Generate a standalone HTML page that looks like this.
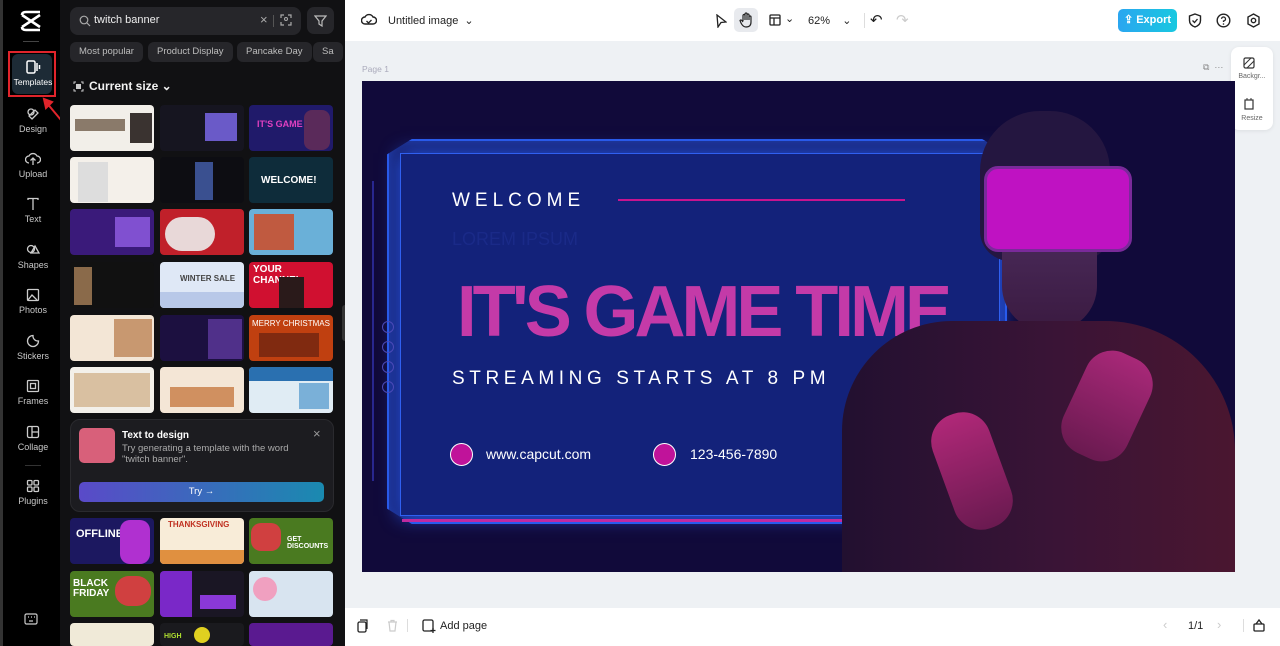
<!DOCTYPE html>
<html><head><meta charset="utf-8"><style>
*{box-sizing:border-box;margin:0;padding:0}
body{width:1280px;height:646px;overflow:hidden;font-family:"Liberation Sans",sans-serif;background:#fff;position:relative}
.abs{position:absolute}
#side{left:0;top:0;width:60px;height:646px;background:#000;border-left:3px solid #333}
.nav{position:absolute;left:3px;width:54px;text-align:center;color:#c8c8c8;font-size:9px}
.nav svg{display:block;margin:0 auto 3px}
#panel{left:60px;top:0;width:285px;height:646px;background:#111113}
.chip{position:absolute;top:42px;height:20px;border-radius:6px;background:#26262a;color:#bdbdbd;font-size:9.5px;line-height:20px;padding:0 9px;white-space:nowrap}
.th{position:absolute;width:84px;height:46px;border-radius:4px;overflow:hidden}
#main{left:345px;top:0;width:935px;height:646px;background:#eef1f4}
.tb{color:#222;font-size:11px}
</style></head><body>
<div id="side" class="abs">
 <svg class="abs" style="left:16px;top:10px" width="24" height="22" viewBox="0 0 24 22"><path d="M3 5 L21 17 M21 5 L3 17 M3 5 Q3 2 7 2 L21 2 M3 17 Q3 20 7 20 L21 20" stroke="#fff" stroke-width="2.6" fill="none"/></svg>
 <div class="abs" style="left:20px;top:41px;width:16px;height:1px;background:#444"></div>
 <div class="abs" style="left:5px;top:51px;width:48px;height:46px;border:2px solid #e0242b;"></div>
 <div class="abs" style="left:9px;top:54px;width:40px;height:40px;border-radius:6px;background:#1d2b36"></div>
 <div class="nav" style="top:60px;color:#fff;font-size:8.5px"><svg width="16" height="14" viewBox="0 0 16 14"><rect x="2" y="1" width="8" height="12" rx="1.5" stroke="#fff" stroke-width="1.5" fill="none"/><path d="M12 3v8M14.5 5v4" stroke="#fff" stroke-width="1.5"/></svg>Templates</div>
 <svg class="abs" style="left:38px;top:96px" width="24" height="26" viewBox="0 0 24 26"><path d="M20 24 L5 6 M3 3 L5 12 L11 6 Z" stroke="#e0242b" stroke-width="2" fill="#e0242b"/></svg>
 <div class="nav" style="top:107px"><svg width="14" height="14" viewBox="0 0 14 14"><circle cx="5" cy="5" r="3" stroke="#ccc" fill="none" stroke-width="1.3"/><path d="M6 12 L12 6 L9 3 L3 9Z" stroke="#ccc" fill="none" stroke-width="1.3"/></svg>Design</div>
 <div class="nav" style="top:152px"><svg width="16" height="14" viewBox="0 0 16 14"><path d="M4 11 A3.5 3.5 0 0 1 4 4 A4.5 4.5 0 0 1 12 4 A3.5 3.5 0 0 1 12 11 M8 13V6 M5.5 8.5 L8 6 L10.5 8.5" stroke="#ccc" fill="none" stroke-width="1.3"/></svg>Upload</div>
 <div class="nav" style="top:197px"><svg width="14" height="14" viewBox="0 0 14 14"><path d="M2 3V1.5H12V3 M7 1.5V13" stroke="#ccc" fill="none" stroke-width="1.3"/></svg>Text</div>
 <div class="nav" style="top:243px"><svg width="14" height="14" viewBox="0 0 14 14"><circle cx="5" cy="6" r="3.5" stroke="#ccc" fill="none" stroke-width="1.3"/><path d="M9 3 L13 10 H5 Z" stroke="#ccc" fill="none" stroke-width="1.3"/></svg>Shapes</div>
 <div class="nav" style="top:288px"><svg width="14" height="14" viewBox="0 0 14 14"><rect x="1.5" y="1.5" width="11" height="11" rx="1" stroke="#ccc" fill="none" stroke-width="1.3"/><path d="M2 12 L6 7 L11 12" stroke="#ccc" fill="none" stroke-width="1.3"/></svg>Photos</div>
 <div class="nav" style="top:334px"><svg width="14" height="14" viewBox="0 0 14 14"><path d="M12.5 7 A5.5 5.5 0 1 1 7 1.5 A5 5 0 0 0 12.5 7Z" stroke="#ccc" fill="none" stroke-width="1.3"/></svg>Stickers</div>
 <div class="nav" style="top:379px"><svg width="14" height="14" viewBox="0 0 14 14"><rect x="1.5" y="1.5" width="11" height="11" rx="1" stroke="#ccc" fill="none" stroke-width="1.3"/><rect x="4.5" y="4.5" width="5" height="5" stroke="#ccc" fill="none" stroke-width="1.3"/></svg>Frames</div>
 <div class="nav" style="top:425px"><svg width="14" height="14" viewBox="0 0 14 14"><rect x="1.5" y="1.5" width="11" height="11" rx="1.5" stroke="#ccc" fill="none" stroke-width="1.3"/><path d="M6 2V12 M6 7H12" stroke="#ccc" stroke-width="1.3"/></svg>Collage</div>
 <div class="abs" style="left:22px;top:465px;width:16px;height:1px;background:#333"></div>
 <div class="nav" style="top:479px"><svg width="14" height="14" viewBox="0 0 14 14"><rect x="1.5" y="1.5" width="4.5" height="4.5" rx="1" stroke="#ccc" fill="none" stroke-width="1.3"/><rect x="8" y="1.5" width="4.5" height="4.5" rx="1" stroke="#ccc" fill="none" stroke-width="1.3"/><rect x="1.5" y="8" width="4.5" height="4.5" rx="1" stroke="#ccc" fill="none" stroke-width="1.3"/><rect x="8" y="8" width="4.5" height="4.5" rx="1" stroke="#ccc" fill="none" stroke-width="1.3"/></svg>Plugins</div>
 <svg class="abs" style="left:21px;top:613px" width="14" height="12" viewBox="0 0 14 12"><rect x="1" y="1" width="12" height="10" rx="1.5" stroke="#ccc" fill="none" stroke-width="1.2"/><path d="M4 4h1M7 4h1M10 4h1M5 8h4" stroke="#ccc" stroke-width="1.2"/></svg>
</div>

<div id="panel" class="abs">
 <div class="abs" style="left:10px;top:7px;width:231px;height:28px;border-radius:8px;background:#26262a"></div>
 <svg class="abs" style="left:19px;top:15px" width="12" height="12" viewBox="0 0 12 12"><circle cx="5" cy="5" r="3.8" stroke="#aaa" fill="none" stroke-width="1.2"/><path d="M8 8L11 11" stroke="#aaa" stroke-width="1.2"/></svg>
 <div class="abs" style="left:34px;top:14px;color:#eee;font-size:11px">twitch banner</div>
 <div class="abs" style="left:200px;top:12px;color:#aaa;font-size:13px">×</div>
 <div class="abs" style="left:213px;top:15px;width:1px;height:12px;background:#555"></div>
 <svg class="abs" style="left:220px;top:14px" width="12" height="12" viewBox="0 0 12 12"><path d="M1 4V1H4M8 1H11V4M11 8V11H8M4 11H1V8" stroke="#aaa" fill="none" stroke-width="1.2"/><circle cx="6" cy="5" r="1.5" stroke="#aaa" fill="none"/></svg>
 <div class="abs" style="left:247px;top:7px;width:27px;height:27px;border-radius:7px;background:#26262a"></div>
 <svg class="abs" style="left:254px;top:14px" width="13" height="13" viewBox="0 0 13 13"><path d="M1 2H12L8 7V12L5 10V7Z" stroke="#bbb" fill="none" stroke-width="1.2"/></svg>
 <div class="chip" style="left:10px">Most popular</div>
 <div class="chip" style="left:88px">Product Display</div>
 <div class="chip" style="left:177px">Pancake Day</div>
 <div class="chip" style="left:253px;width:30px">Sa</div>
 <svg class="abs" style="left:13px;top:81px" width="11" height="11" viewBox="0 0 11 11"><path d="M1 3V1H3M8 1H10V3M10 8V10H8M3 10H1V8" stroke="#ccc" fill="none"/><rect x="3" y="3" width="5" height="5" fill="#ccc"/></svg>
 <div class="abs" style="left:29px;top:79px;color:#f2f2f2;font-size:12px;font-weight:bold">Current size ⌄</div>

 <div class="th" style="left:10px;top:105px;background:#f2efe9"><div class="abs" style="left:60px;top:8px;width:22px;height:30px;background:#3a3330"></div><div class="abs" style="left:5px;top:14px;width:50px;height:12px;background:#8a7a6a"></div></div>
 <div class="th" style="left:100px;top:105px;background:#161520"><div class="abs" style="left:45px;top:8px;width:32px;height:28px;background:#6a5ac8"></div></div>
 <div class="th" style="left:189px;top:105px;background:#201a6a"><div class="abs" style="left:8px;top:14px;color:#e040c0;font-size:9px;font-weight:bold">IT'S GAME TIM</div><div class="abs" style="left:55px;top:5px;width:26px;height:40px;background:#5a2a5a;border-radius:8px"></div></div>
 <div class="th" style="left:10px;top:157px;background:#f4f0ea"><div class="abs" style="left:8px;top:5px;width:30px;height:40px;background:#ddd"></div></div>
 <div class="th" style="left:100px;top:157px;background:#0d0d12"><div class="abs" style="left:35px;top:5px;width:18px;height:38px;background:#3a5090"></div></div>
 <div class="th" style="left:189px;top:157px;background:#0e2c3a"><div class="abs" style="left:12px;top:18px;color:#fff;font-size:10px;font-weight:bold">WELCOME!</div></div>
 <div class="th" style="left:10px;top:209px;background:#3a1a7a"><div class="abs" style="left:45px;top:8px;width:35px;height:30px;background:#8050d0"></div></div>
 <div class="th" style="left:100px;top:209px;background:#c0202a"><div class="abs" style="left:5px;top:8px;width:50px;height:34px;background:#e8d8d8;border-radius:20px"></div></div>
 <div class="th" style="left:189px;top:209px;background:#6ab0d8"><div class="abs" style="left:5px;top:5px;width:40px;height:36px;background:#c05a40"></div></div>
 <div class="th" style="left:10px;top:262px;background:#111"><div class="abs" style="left:4px;top:5px;width:18px;height:38px;background:#8a6a4a"></div></div>
 <div class="th" style="left:100px;top:262px;background:#dfe8f6"><div class="abs" style="left:20px;top:12px;color:#444;font-size:8px;font-weight:bold">WINTER SALE</div><div class="abs" style="left:0;top:30px;width:84px;height:16px;background:#b8c8e8"></div></div>
 <div class="th" style="left:189px;top:262px;background:#d01030"><div class="abs" style="left:4px;top:2px;color:#fff;font-size:10px;font-weight:bold">YOUR CHANNEL</div><div class="abs" style="left:30px;top:15px;width:25px;height:31px;background:#2a1a1a"></div></div>
 <div class="th" style="left:10px;top:315px;background:#f3e6d6"><div class="abs" style="left:44px;top:4px;width:38px;height:38px;background:#c89870"></div></div>
 <div class="th" style="left:100px;top:315px;background:#1c1040"><div class="abs" style="left:48px;top:4px;width:34px;height:40px;background:#50308a"></div></div>
 <div class="th" style="left:189px;top:315px;background:#c04010"><div class="abs" style="left:3px;top:4px;color:#fff;font-size:8px">MERRY CHRISTMAS</div><div class="abs" style="left:10px;top:18px;width:60px;height:24px;background:#802a10"></div></div>
 <div class="th" style="left:10px;top:367px;background:#f3f0ea"><div class="abs" style="left:4px;top:6px;width:76px;height:34px;background:#c8a070;opacity:.6"></div></div>
 <div class="th" style="left:100px;top:367px;background:#f4e6d6"><div class="abs" style="left:10px;top:20px;width:64px;height:20px;background:#d09060"></div></div>
 <div class="th" style="left:189px;top:367px;background:#e0ecf4"><div class="abs" style="left:0;top:0;width:84px;height:14px;background:#2a70b0"></div><div class="abs" style="left:50px;top:16px;width:30px;height:26px;background:#7ab0d8"></div></div>

 <div class="abs" style="left:10px;top:419px;width:264px;height:93px;border-radius:10px;background:#1c1c20;border:1px solid #2a2a2e"></div>
 <div class="abs" style="left:19px;top:428px;width:36px;height:35px;border-radius:5px;background:#d8607a"></div>
 <div class="abs" style="left:62px;top:430px;color:#fff;font-size:10px;font-weight:bold">Text to design</div>
 <div class="abs" style="left:62px;top:443px;color:#aaa;font-size:9.5px;line-height:11px;width:180px">Try generating a template with the word "twitch banner".</div>
 <div class="abs" style="left:253px;top:426px;color:#999;font-size:13px">×</div>
 <div class="abs" style="left:19px;top:482px;width:245px;height:20px;border-radius:5px;background:linear-gradient(90deg,#5a4ac8,#1a8ab0);color:#fff;font-size:9.5px;text-align:center;line-height:20px">Try →</div>

 <div class="th" style="left:10px;top:518px;background:#1c1860"><div class="abs" style="left:6px;top:10px;color:#fff;font-size:11px;font-weight:bold">OFFLINE</div><div class="abs" style="left:50px;top:2px;width:30px;height:44px;background:#b030d0;border-radius:10px"></div></div>
 <div class="th" style="left:100px;top:518px;background:#f8ecd8"><div class="abs" style="left:8px;top:2px;color:#c03020;font-size:8px;font-weight:bold">THANKSGIVING</div><div class="abs" style="left:0;top:32px;width:84px;height:14px;background:#e09040"></div></div>
 <div class="th" style="left:189px;top:518px;background:#4a7a20"><div class="abs" style="left:2px;top:5px;width:30px;height:28px;background:#d04040;border-radius:10px"></div><div class="abs" style="left:38px;top:18px;color:#fff;font-size:7px;font-weight:bold">GET DISCOUNTS</div></div>
 <div class="th" style="left:10px;top:571px;background:#4a7a20"><div class="abs" style="left:3px;top:8px;color:#fff;font-size:10px;font-weight:bold;line-height:10px">BLACK<br>FRIDAY</div><div class="abs" style="left:45px;top:5px;width:36px;height:30px;background:#d04040;border-radius:14px"></div></div>
 <div class="th" style="left:100px;top:571px;background:#1a1624"><div class="abs" style="left:0;top:0;width:32px;height:46px;background:#7a28c8"></div><div class="abs" style="left:40px;top:24px;width:36px;height:14px;background:#8a38d8"></div></div>
 <div class="th" style="left:189px;top:571px;background:#d8e4f0"><div class="abs" style="left:4px;top:6px;width:24px;height:24px;border-radius:50%;background:#f0a0c0"></div></div>
 <div class="th" style="left:10px;top:623px;background:#f0ead8;height:23px"></div>
 <div class="th" style="left:100px;top:623px;background:#1a1a1e;height:23px"><div class="abs" style="left:4px;top:10px;color:#b0e030;font-size:7px;font-weight:bold">HIGH</div><div class="abs" style="left:34px;top:4px;width:16px;height:16px;background:#e0d020;border-radius:50%"></div></div>
 <div class="th" style="left:189px;top:623px;background:#5a1a90;height:23px"></div>
 <div class="abs" style="left:282px;top:305px;width:7px;height:36px;border-radius:3px;background:#333"></div>
</div>

<div id="main" class="abs">
 <div class="abs" style="left:0;top:0;width:935px;height:41px;background:#fff"></div>
 <svg class="abs" style="left:16px;top:12px" width="16" height="15" viewBox="0 0 16 15"><path d="M4 12 A3.5 3.5 0 0 1 4 5 A4.5 4.5 0 0 1 12 5 A3.5 3.5 0 0 1 12 12Z" stroke="#222" fill="none" stroke-width="1.4"/><path d="M5.5 9 L7.5 11 L10.5 8" stroke="#222" fill="none" stroke-width="1.3"/></svg>
 <div class="abs tb" style="left:43px;top:14px">Untitled image &nbsp;⌄</div>
 <svg class="abs" style="left:370px;top:14px" width="12" height="14" viewBox="0 0 12 14"><path d="M2 1 L11 8 L6 8.5 L3 13Z" stroke="#222" fill="none" stroke-width="1.3"/></svg>
 <div class="abs" style="left:389px;top:8px;width:24px;height:24px;border-radius:5px;background:#e8eaee"></div>
 <svg class="abs" style="left:394px;top:12px" width="14" height="16" viewBox="0 0 14 16"><path d="M4 9V3.5a1 1 0 0 1 2 0V8 M6 7V2a1 1 0 0 1 2 0V8 M8 7V3a1 1 0 0 1 2 0V8 M10 8V5a1 1 0 0 1 2 0V10 Q12 15 7 15 Q4 15 2 11 L1 8.5 Q1.5 7.5 3 8.5 L4 10" stroke="#222" fill="none" stroke-width="1.2"/></svg>
 <svg class="abs" style="left:424px;top:14px" width="12" height="12" viewBox="0 0 12 12"><rect x="1" y="1" width="10" height="10" rx="1" stroke="#222" fill="none" stroke-width="1.3"/><path d="M1 4H11M5 4V11" stroke="#222" stroke-width="1.3"/></svg>
 <div class="abs tb" style="left:440px;top:12px">⌄</div>
 <div class="abs tb" style="left:463px;top:14px">62% &nbsp;&nbsp;&nbsp;⌄</div>
 <div class="abs" style="left:519px;top:13px;width:1px;height:15px;background:#ddd"></div>
 <div class="abs tb" style="left:525px;top:11px;font-size:15px">↶</div>
 <div class="abs tb" style="left:551px;top:11px;font-size:15px;color:#ccc">↷</div>
 <div class="abs" style="left:773px;top:9px;width:59px;height:23px;border-radius:5px;background:linear-gradient(90deg,#2aa6f0,#18c8e0);color:#fff;font-size:11px;font-weight:bold;line-height:23px;text-align:center">⇪ Export</div>
 <svg class="abs" style="left:843px;top:13px" width="14" height="15" viewBox="0 0 14 15"><path d="M7 1 L12.5 3 V7.5 Q12.5 12 7 14 Q1.5 12 1.5 7.5 V3Z" stroke="#222" fill="none" stroke-width="1.4"/><path d="M4.5 7.5 L6.5 9.5 L9.5 6" stroke="#222" fill="none" stroke-width="1.3"/></svg>
 <svg class="abs" style="left:871px;top:13px" width="15" height="15" viewBox="0 0 15 15"><circle cx="7.5" cy="7.5" r="6.3" stroke="#222" fill="none" stroke-width="1.4"/><path d="M5.5 5.8 A2 2 0 1 1 7.5 8 V9" stroke="#222" fill="none" stroke-width="1.3"/><circle cx="7.5" cy="11" r=".8" fill="#222"/></svg>
 <svg class="abs" style="left:901px;top:13px" width="15" height="15" viewBox="0 0 15 15"><path d="M7.5 1 L13 4 V11 L7.5 14 L2 11 V4Z" stroke="#222" fill="none" stroke-width="1.4"/><circle cx="7.5" cy="7.5" r="2.2" stroke="#222" fill="none" stroke-width="1.4"/></svg>

 <div class="abs" style="left:17px;top:64px;color:#aab;font-size:8.5px">Page 1</div>
 <div class="abs" style="left:858px;top:62px;color:#888;font-size:9px">⧉ &nbsp;···</div>
 <div class="abs" style="left:886px;top:47px;width:42px;height:83px;border-radius:8px;background:#fff;box-shadow:0 1px 4px rgba(0,0,0,.08)"></div>
 <svg class="abs" style="left:898px;top:57px" width="12" height="12" viewBox="0 0 12 12"><rect x="1" y="1" width="10" height="10" rx="1.5" stroke="#333" fill="none" stroke-width="1.2"/><path d="M1 8L8 1M4 11L11 4" stroke="#333" stroke-width="1"/></svg>
 <div class="abs" style="left:888px;top:73px;width:38px;text-align:center;color:#666;font-size:7px">Backgr...</div>
 <svg class="abs" style="left:898px;top:98px" width="12" height="12" viewBox="0 0 12 12"><rect x="2" y="2" width="8" height="9" stroke="#333" fill="none" stroke-width="1.2"/><path d="M4 0V2M8 0V2" stroke="#333"/></svg>
 <div class="abs" style="left:888px;top:115px;width:38px;text-align:center;color:#666;font-size:7px">Resize</div>

 <!-- canvas -->
 <div class="abs" style="left:17px;top:81px;width:873px;height:491px;background:#110a3a;overflow:hidden">
  <div class="abs" style="left:25px;top:58px;width:620px;height:385px;border:2px solid #2a5ae8;clip-path:polygon(4% 0,96% 0,100% 4%,100% 96%,96% 100%,4% 100%,0 96%,0 4%);box-shadow:0 0 20px #2a5ae8 inset"></div>
  <div class="abs" style="left:10px;top:100px;width:10px;height:300px;border-left:2px solid #3a3ac8;opacity:.6"></div>
  <div class="abs" style="left:38px;top:72px;width:600px;height:363px;background:#13227a;border:1px solid #3060f0;box-shadow:0 0 18px #2860ff"></div>
  <div class="abs" style="left:20px;top:240px;width:12px;height:12px;border:1.5px solid #4a4ab8;border-radius:50%"></div>
  <div class="abs" style="left:20px;top:260px;width:12px;height:12px;border:1.5px solid #4a4ab8;border-radius:50%"></div>
  <div class="abs" style="left:20px;top:280px;width:12px;height:12px;border:1.5px solid #4a4ab8;border-radius:50%"></div>
  <div class="abs" style="left:20px;top:300px;width:12px;height:12px;border:1.5px solid #4a4ab8;border-radius:50%"></div>
  <div class="abs" style="left:40px;top:438px;width:490px;height:3px;background:#c02aa0"></div>
  <div class="abs" style="left:90px;top:109px;color:#fff;font-size:19px;letter-spacing:5px">WELCOME</div>
  <div class="abs" style="left:256px;top:118px;width:287px;height:2px;background:#c8148e"></div>
  <div class="abs" style="left:90px;top:148px;color:#1a2a88;font-size:18px">LOREM IPSUM</div>
  <div class="abs" style="left:95px;top:190px;color:#c43aa8;font-size:72px;font-weight:bold;letter-spacing:-4px;white-space:nowrap;transform:scaleX(.98);transform-origin:left">IT'S GAME TIME</div>
  <div class="abs" style="left:90px;top:287px;color:#fff;font-size:19px;letter-spacing:4.6px;white-space:nowrap">STREAMING STARTS AT 8 PM</div>
  <div class="abs" style="left:88px;top:362px;width:23px;height:23px;border-radius:50%;background:#c0139a;border:1.5px solid #fff"></div>
  <div class="abs" style="left:124px;top:365px;color:#fff;font-size:14px">www.capcut.com</div>
  <div class="abs" style="left:291px;top:362px;width:23px;height:23px;border-radius:50%;background:#c0139a;border:1.5px solid #fff"></div>
  <div class="abs" style="left:328px;top:365px;color:#fff;font-size:14px">123-456-7890</div>
  <!-- man -->
  <div class="abs" style="left:618px;top:30px;width:130px;height:150px;border-radius:60px 60px 30px 30px;background:#241640"></div>
  <div class="abs" style="left:640px;top:150px;width:95px;height:100px;border-radius:10px 10px 45px 45px;background:linear-gradient(180deg,#4a2a5a,#3a1a40)"></div>
  <div class="abs" style="left:622px;top:85px;width:148px;height:86px;border-radius:14px;background:#bf12c2;border:3px solid #7a2a9a"></div>
  <div class="abs" style="left:480px;top:240px;width:393px;height:260px;border-radius:110px 130px 0 0;background:linear-gradient(90deg,#221030,#3a1436 55%,#4a1630)"></div>
  <div class="abs" style="left:580px;top:330px;width:60px;height:120px;border-radius:28px;background:linear-gradient(180deg,#b02878,#6a1a50);transform:rotate(-20deg)"></div>
  <div class="abs" style="left:710px;top:270px;width:70px;height:110px;border-radius:28px;background:linear-gradient(180deg,#a82878,#6a1a50);transform:rotate(25deg)"></div>
 </div>

 <div class="abs" style="left:0;top:608px;width:935px;height:38px;background:#fff"></div>
 <svg class="abs" style="left:11px;top:619px" width="12" height="14" viewBox="0 0 12 14"><rect x="2" y="3" width="8" height="10" rx="1.5" stroke="#222" fill="none" stroke-width="1.3"/><path d="M4 1H11V10" stroke="#222" fill="none" stroke-width="1.2"/></svg>
 <svg class="abs" style="left:42px;top:619px" width="11" height="13" viewBox="0 0 11 13"><path d="M1 3H10M4 3V1.5H7V3M2 3L3 12H8L9 3" stroke="#ccc" fill="none" stroke-width="1.2"/></svg>
 <div class="abs" style="left:62px;top:619px;width:1px;height:13px;background:#ddd"></div>
 <svg class="abs" style="left:77px;top:619px" width="14" height="14" viewBox="0 0 14 14"><rect x="1" y="1" width="10" height="11" rx="1.5" stroke="#222" fill="none" stroke-width="1.3"/><path d="M11 9V14M8.5 11.5H13.5" stroke="#222" stroke-width="1.3"/></svg>
 <div class="abs tb" style="left:95px;top:620px">Add page</div>
 <div class="abs" style="left:818px;top:617px;color:#ccc;font-size:13px">‹</div>
 <div class="abs tb" style="left:843px;top:620px">1/1</div>
 <div class="abs" style="left:872px;top:617px;color:#ccc;font-size:13px">›</div>
 <div class="abs" style="left:898px;top:619px;width:1px;height:13px;background:#ddd"></div>
 <svg class="abs" style="left:908px;top:618px" width="12" height="14" viewBox="0 0 12 14"><rect x="1" y="6" width="10" height="7" rx="1" stroke="#222" fill="none" stroke-width="1.3"/><path d="M3 6L6 2L9 6" stroke="#222" fill="none" stroke-width="1.3"/></svg>
</div>
</body></html>
